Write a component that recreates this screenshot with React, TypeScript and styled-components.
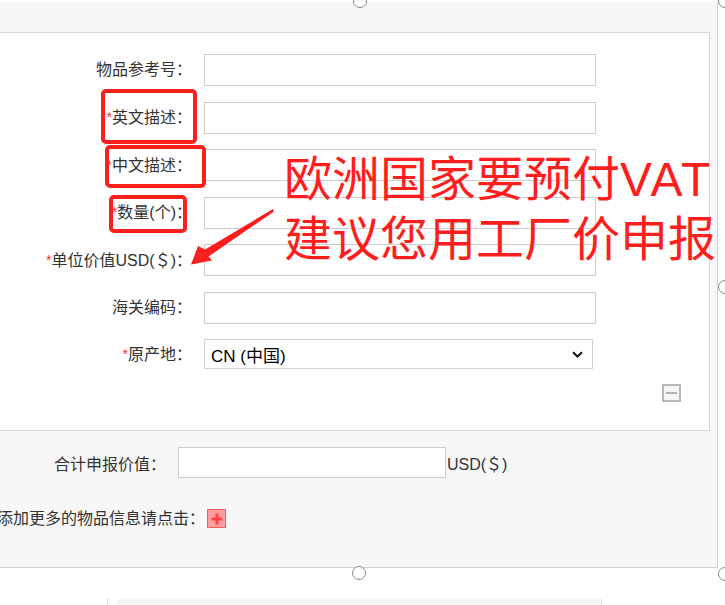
import React from "react";
import styled, { createGlobalStyle } from "styled-components";

const UI_FONT = `"Liberation Sans", "Noto Sans CJK SC", sans-serif`;

const GlobalStyle = createGlobalStyle`
  html, body { margin: 0; padding: 0; background: #ffffff; }
  body { font-family: ${UI_FONT}; }
  *, *::before, *::after { box-sizing: border-box; }
`;

const Page = styled.div`
  position: relative;
  width: 725px;
  height: 605px;
  overflow: hidden;
  background: #ffffff;
  font-family: ${UI_FONT};
`;

const OuterPanel = styled.section`
  margin-top: 2px;
  width: 718px;
  height: 566px;
  padding: 30px 7px 0 0;
  background: #f7f7f7;
  border-right: 1px solid #cfcfcf;
  border-bottom: 1px solid #cfcfcf;
`;

const InnerPanel = styled.div`
  height: 399px;
  background: #ffffff;
  border: 1px solid #d6d6d6;
  border-left: none;
  padding-top: 21px;
`;

const FieldGrid = styled.div`
  display: grid;
  grid-template-columns: 192px auto;
  column-gap: 12px;
  row-gap: 15.5px;
  align-items: center;
  justify-content: start;
`;

const FieldLabel = styled.label`
  text-align: right;
  font-size: 16px;
  line-height: 20px;
  color: #333333;
  white-space: nowrap;
`;

const Star = styled.span`
  color: #ff3030;
  font-size: 14px;
  vertical-align: 1px;
`;

const TextField = styled.input<{ $w?: number; $h?: number }>`
  display: block;
  width: ${(p) => p.$w ?? 392}px;
  height: ${(p) => p.$h ?? 32}px;
  margin: 0;
  border: 1px solid #cccccc;
  border-radius: 0;
  background: #ffffff;
  padding: 0 6px;
  font: 16px ${UI_FONT};
  outline: none;
`;

const SelectBox = styled.div`
  width: 389px;
  height: 30px;
  display: flex;
  align-items: center;
  justify-content: space-between;
  padding: 0 9px 0 6px;
  border: 1px solid #d3d3d3;
  background: #ffffff;
  font-size: 17px;
  color: #000000;
`;

const CollapseRow = styled.div`
  display: flex;
  justify-content: flex-end;
  padding-right: 28px;
  margin-top: 15px;
`;

const MinusButton = styled.button`
  appearance: none;
  width: 19px;
  height: 18px;
  padding: 0;
  margin: 0;
  border: 2px solid #b8b8b8;
  background: #f5f5f5;
  display: flex;
  align-items: center;
  justify-content: center;
  &::before {
    content: "";
    width: 11px;
    height: 2px;
    background: #b0b0b0;
  }
`;

const TotalRow = styled.div`
  display: flex;
  align-items: center;
  margin-top: 16px;
`;

const TotalLabel = styled.label`
  width: 166px;
  margin-right: 12px;
  text-align: right;
  font-size: 16px;
  color: #333333;
  white-space: nowrap;
`;

const Unit = styled.span`
  margin-left: 1px;
  font-size: 16px;
  color: #333333;
`;

const AddMoreRow = styled.div`
  display: flex;
  align-items: center;
  height: 19px;
  margin-top: 31px;
`;

const AddMoreLabel = styled.div`
  width: 205px;
  flex: none;
  display: flex;
  justify-content: flex-end;
  white-space: nowrap;
  font-size: 16px;
  line-height: 19px;
  color: #333333;
`;

const PlusButton = styled.button`
  appearance: none;
  position: relative;
  width: 19px;
  height: 19px;
  margin: 0 0 0 2px;
  padding: 0;
  border: 1px solid #ff5a5a;
  background: #ff9e9e;
  &::before,
  &::after {
    content: "";
    position: absolute;
    background: #ff4444;
    left: 50%;
    top: 50%;
    transform: translate(-50%, -50%);
  }
  &::before { width: 11px; height: 3px; }
  &::after { width: 3px; height: 11px; }
`;

const BottomStrip = styled.div`
  display: flex;
  height: 7px;
  margin: 30px 0 0 107px;
`;

const StripRule = styled.div`
  width: 1px;
  background: #dcdcdc;
`;

const StripCard = styled.div`
  width: 485px;
  margin: 1px 0 0 9px;
  background: #f5f5f5;
  border-right: 1px solid #e3e3e3;
`;

/* ---- overlays (screenshot annotations & selection handles) ---- */

const Handle = styled.span<{ $x: number; $y: number }>`
  position: absolute;
  left: ${(p) => p.$x - 7}px;
  top: ${(p) => p.$y - 7}px;
  width: 14px;
  height: 14px;
  border-radius: 50%;
  border: 1.5px solid #8a8a8a;
  background: #ffffff;
`;

const HighlightBox = styled.span<{ $x: number; $y: number; $w: number; $h: number }>`
  position: absolute;
  left: ${(p) => p.$x}px;
  top: ${(p) => p.$y}px;
  width: ${(p) => p.$w}px;
  height: ${(p) => p.$h}px;
  border: 4px solid #ff1e1e;
  border-radius: 5px;
`;

const Callout = styled.div`
  position: absolute;
  left: 284px;
  top: 150px;
  font-family: "Liberation Sans", "Noto Sans CJK SC", sans-serif;
  font-size: 48px;
  line-height: 60px;
  color: #ff1e1e;
  white-space: nowrap;
`;

const Latin = styled.span`
  letter-spacing: 2px;
`;

const ArrowLayer = styled.svg`
  position: absolute;
  left: 0;
  top: 0;
  pointer-events: none;
`;

const Chevron = () => (
  <svg width="11" height="7" viewBox="0 0 11 7">
    <path d="M1 1.2 L5.5 5.5 L10 1.2" fill="none" stroke="#111" strokeWidth="2" />
  </svg>
);

type Field = { label: string; required?: boolean };

const fields: Field[] = [
  { label: "物品参考号：" },
  { label: "英文描述：", required: true },
  { label: "中文描述：", required: true },
  { label: "数量(个)：", required: true },
  { label: "单位价值USD(＄)：", required: true },
  { label: "海关编码：" },
];

export default function App() {
  return (
    <Page>
      <GlobalStyle />
      <OuterPanel>
        <InnerPanel>
          <FieldGrid>
            {fields.map((f) => (
              <React.Fragment key={f.label}>
                <FieldLabel>
                  {f.required && <Star>*</Star>}
                  {f.label}
                </FieldLabel>
                <TextField type="text" />
              </React.Fragment>
            ))}
            <FieldLabel>
              <Star>*</Star>原产地：
            </FieldLabel>
            <SelectBox role="combobox">
              <span>CN (中国)</span>
              <Chevron />
            </SelectBox>
          </FieldGrid>
          <CollapseRow>
            <MinusButton aria-label="collapse" />
          </CollapseRow>
        </InnerPanel>
        <TotalRow>
          <TotalLabel>合计申报价值：</TotalLabel>
          <TextField type="text" $w={268} $h={31} />
          <Unit>USD(＄)</Unit>
        </TotalRow>
        <AddMoreRow>
          <AddMoreLabel>
            <span>添加更多的物品信息请点击：</span>
          </AddMoreLabel>
          <PlusButton aria-label="add" />
        </AddMoreRow>
      </OuterPanel>
      <BottomStrip>
        <StripRule />
        <StripCard />
      </BottomStrip>

      <Handle $x={360} $y={1} />
      <Handle $x={725} $y={1} />
      <Handle $x={725} $y={287} />
      <Handle $x={359} $y={573} />
      <Handle $x={725} $y={574} />

      <HighlightBox $x={101} $y={89} $w={96} $h={55} />
      <HighlightBox $x={105} $y={145} $w={101} $h={43} />
      <HighlightBox $x={109} $y={195} $w={78} $h={38} />

      <Callout>
        欧洲国家要预付<Latin>VAT</Latin>
        <br />
        建议您用工厂价申报
      </Callout>
      <ArrowLayer width="725" height="605" viewBox="0 0 725 605">
        <polygon
          points="273,209 205,249.5 198,246 191,264.5 212,260.5 208.5,256.5 274,211.5"
          fill="#ff1e1e"
        />
      </ArrowLayer>
    </Page>
  );
}
